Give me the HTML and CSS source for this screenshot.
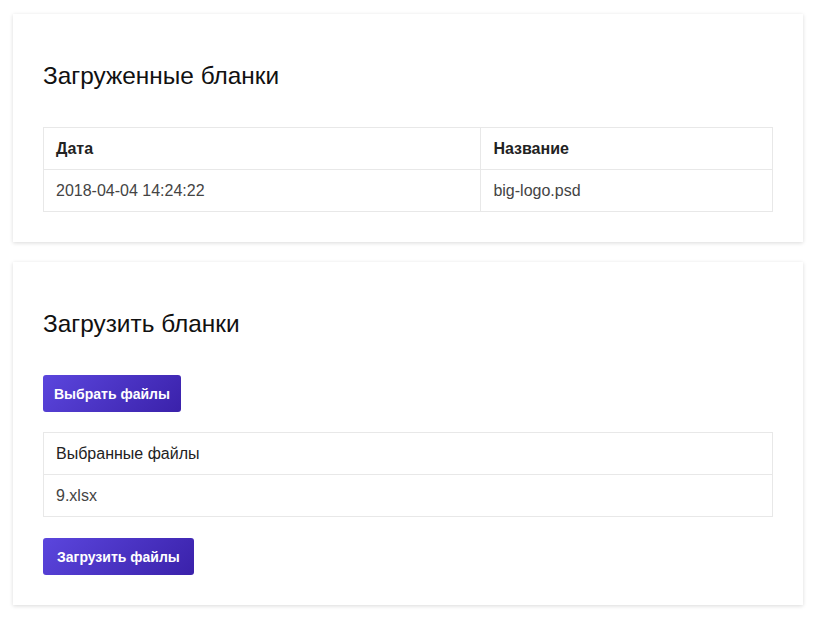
FILE: index.html
```html
<!DOCTYPE html>
<html lang="ru">
<head>
<meta charset="utf-8">
<title>Бланки</title>
<link rel="stylesheet" href="styles.css">
</head>
<body>
<main class="page">
  <section class="card">
    <h2 class="card-title">Загруженные бланки</h2>
    <table class="table">
      <thead>
        <tr><th class="col-date">Дата</th><th>Название</th></tr>
      </thead>
      <tbody>
        <tr><td>2018-04-04 14:24:22</td><td>big-logo.psd</td></tr>
      </tbody>
    </table>
  </section>
  <section class="card">
    <h2 class="card-title">Загрузить бланки</h2>
    <button class="btn" type="button">Выбрать файлы</button>
    <table class="table table-files">
      <thead>
        <tr><th class="th-plain">Выбранные файлы</th></tr>
      </thead>
      <tbody>
        <tr><td>9.xlsx</td></tr>
      </tbody>
    </table>
    <button class="btn btn-wide" type="button">Загрузить файлы</button>
  </section>
</main>
</body>
</html>
```
FILE: styles.css
```css
html, body {
  margin: 0;
  padding: 0;
  background: #ffffff;
}
body {
  font-family: "Liberation Sans", Arial, sans-serif;
  color: #333;
}
.page {
  display: flex;
  flex-direction: column;
  gap: 20px;
  padding: 14px 13px;
}
.card {
  background: #fff;
  box-shadow: 0 1px 4px rgba(0, 0, 0, 0.15);
  padding: 48px 30px 30px;
  display: flex;
  flex-direction: column;
  align-items: flex-start;
}
.card-title {
  margin: 0 0 37px;
  font-size: 24.4px;
  font-weight: 400;
  line-height: 28px;
  color: #111;
}
.table {
  width: 100%;
  border-collapse: collapse;
  font-size: 16px;
}
.table th, .table td {
  border: 1px solid #e8e8e8;
  text-align: left;
  padding: 0 12px;
  height: 41px;
}
.table th {
  font-weight: 700;
  color: #222;
}
.table td {
  color: #444;
}
.col-date {
  width: 60%;
}
.table .th-plain {
  font-weight: 400;
}
.btn {
  font-family: "Liberation Sans", Arial, sans-serif;
  font-size: 14px;
  font-weight: 700;
  color: #fff;
  border: none;
  border-radius: 3px;
  height: 37px;
  padding: 0 11px;
  background: linear-gradient(135deg, #5b46dd 0%, #3a21aa 100%);
  cursor: pointer;
}
.btn-wide {
  padding: 0 14px;
}
.table-files {
  margin: 20px 0 21px;
}
```
